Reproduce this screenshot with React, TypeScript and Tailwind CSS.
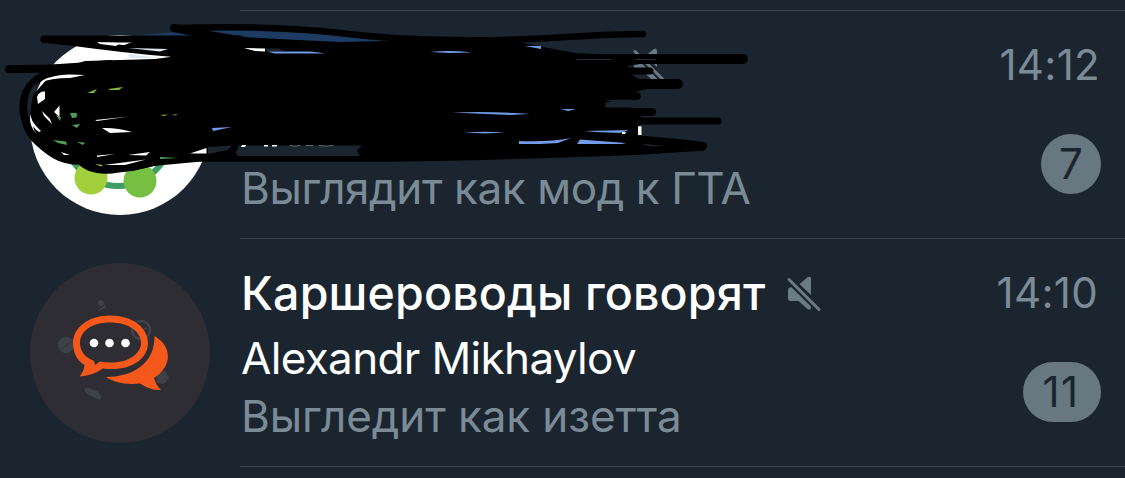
import React from "react";

type ChatRowProps = {
  avatar: React.ReactNode;
  title: React.ReactNode;
  sender: string;
  message: string;
  messageClass: string;
  time: string;
  timeClass: string;
  unread: number;
  badgeClass: string;
  children?: React.ReactNode;
};

function MutedIcon() {
  return (
    <svg className="mt-0.5 shrink-0" width="36" height="36" viewBox="0 0 36 36">
      <path
        d="M12.500 8 20.500 1.200Q24 -0.500 24 3V19ZM1 14Q1 11.300 4.500 11.300L24 30.500Q24.500 35.500 20.500 33L11.500 25H3.500Q1 25 1 22.500Z"
        fill="#6b7b84"
      />
      <path d="M2 3.500 32 33.500" stroke="#1b252f" strokeWidth="6" />
      <path d="M2 3.500 32 33.500" stroke="#6b7b84" strokeWidth="3" strokeLinecap="round" />
    </svg>
  );
}

function MoleculeAvatar() {
  return (
    <svg width="180" height="180" viewBox="0 0 180 180">
      <circle cx="90" cy="90" r="90" fill="#fff" />
      <circle cx="88" cy="98" r="53" fill="none" stroke="#3f9c62" strokeWidth="6" />
      <circle cx="61" cy="143" r="16.500" fill="#a2cf3c" />
      <circle cx="110" cy="146" r="16.500" fill="#76bf43" />
    </svg>
  );
}

function SpeechAvatar() {
  return (
    <svg width="180" height="180" viewBox="0 0 180 180">
      <circle cx="90" cy="90" r="90" fill="#2d2d33" />
      {/* faint decorations */}
      <g fill="#3e4146">
        <circle cx="36" cy="82" r="8" />
        <circle cx="71" cy="40" r="3" />
        <path d="M68 47 75 42 76 45 68 48ZM54 126Q59 123 63 127 69 127 71 134L70 137 63 134 56 130Z" />
        <path d="M126 112 135 107 139 115 134 121 127 120Z" />
      </g>
      <path d="M30 86 42 79" stroke="#37393e" strokeWidth="1.500" />
      <circle cx="111" cy="67" r="9" fill="none" stroke="#3d4449" strokeWidth="2.500" />
      <path d="M105 65 111 68 117 65M111 68V73" stroke="#3d4449" strokeWidth="2" fill="none" />
      {/* back bubble */}
      <path
        d="M124.500 73C142 83 143 103 124 115Q126 122 131 127 121 128 110 120.500C97 122 85 120 76 114C102 114 125 101 124.500 73Z"
        fill="#f4581a"
      />
      {/* front bubble */}
      <path
        fillRule="evenodd"
        d="M80 52.500C103 52.500 118 65 118 80C118 97 99 109 73 105.500Q62 113 49.500 113.500 54 108 54.500 102C46 97 43 88 43 80C43 65 58 52.500 80 52.500ZM80 59.500C62 59.500 50 68 50 80C50 87 54 94 64 98L65 102 70 98.500C95 103 111 92 111 80C111 68 98 59.500 80 59.500Z"
        fill="#f4581a"
      />
      <g fill="#fff">
        <circle cx="64" cy="80" r="4.300" />
        <circle cx="79.500" cy="80" r="4.300" />
        <circle cx="95.500" cy="80" r="4.300" />
      </g>
    </svg>
  );
}

function Scribble() {
  return (
    <svg
      className="absolute left-0 top-0"
      width="760"
      height="180"
      viewBox="0 11 760 180"
      fill="none"
      strokeLinecap="round"
      strokeLinejoin="round"
    >
      <path d="M128 36 190 31 240 30 320 34 392 42 330 44 240 42Z" fill="#1c3c63" />
      {/* solid body */}
      <path
        d="M48 78 62 68 85 61 155 59 170 57 172 54 135 49 122 46 132 42 165 40 240 37 340 42 385 41 500 38 538 46 575 53 640 56 640 64 628 66 628 72 640 80 650 88 628 94 605 100 645 112 640 118 640 126 636 142 660 150 510 156 400 160 207 161 153 166 133 171 100 173 87 170 75 162 53 157 43 143 34 130 30 112 33 95Z"
        fill="#000"
      />
      <g stroke="#000">
        <path d="M174 28C240 26 290 27 340 33S440 41 500 40 590 34 643 34" strokeWidth="6.500" />
        <path d="M174 28Q210 36 245 41" strokeWidth="8" />
        <path d="M44 39H240M44 39.500C90 43 120 51 210 56" strokeWidth="7" />
        <path d="M9 69C50 69 70 68 110 64" strokeWidth="8" />
        <path d="M52 72C22 82 20 105 26 122Q29 134 36 138" strokeWidth="8" />
        <path d="M34 138Q45 149 55 155T80 161Q90 170 104 170T150 163 210 158H390Q520 156 640 151L702 147" strokeWidth="7.500" />
        <path d="M560 59H743" strokeWidth="10" />
        <path d="M560 71H650" strokeWidth="7" />
        <path d="M560 84H678" strokeWidth="10" />
        <path d="M560 96H637" strokeWidth="7.500" />
        <path d="M560 112H652" strokeWidth="8" />
        <path d="M560 121H718" strokeWidth="7" />
        <path d="M560 135Q640 138 703 146L670 148" strokeWidth="8" />
      </g>
      {/* what still shows between the strokes */}
      <g fill="#1b252f">
        <path d="M238 145.500H362L357 150Q358 155 361 156H238Q234 154 238 148Z" />
        <path d="M208 147 232 145.500 228 150 208 154Z" />
        <path d="M28 100Q29 89 37 82L33 92Q29 98 31 115Z" />
        <path d="M265 48.500H278L285 51 266 51Z" />
        <path d="M605 102.500 640 100 642 107.500H606Z" />
      </g>
      <g fill="#fff">
        <path d="M40 83Q48 75 70 74.500L85 75 70 78Q50 78 40 83ZM37 97Q39 91 45 91.500V99L38 104ZM54 112 59.500 105.500V117ZM30 116Q33 124 41 131L39 132Q31 127 30 116ZM42 111 50 119 52 124 44 116Z" />
        <path d="M102 128Q117 127.500 132 132L110 133ZM95 120 115 118 129 116.500 97 121ZM190 153.500 206.500 148V153.500Z" />
        <path d="M97 155.500 115 154 97 157ZM128 155 150 152 146 155.500ZM104 165 146 159.500 125 165ZM61 152 70 155H64ZM97 42 120 43 116 46 100 44ZM244 48 265 48.500V51.500L255 51Z" />
        <path d="M242 145H246L245 147H241ZM264 145H268V146.500H264ZM272 145H277V146.500H272ZM638 127Q639 125.500 641.500 126.500V135H638ZM622 132H626L625 134H622Z" />
      </g>
      <path d="M128 48 168 49 160 51.500ZM128 54 158 58 130 58Z" fill="#dce8f4" />
      <g fill="#6f9be8">
        <path d="M267 51.500H310Q320 52.500 325 53.500H275ZM430 52Q450 50 472 52.500L450 53ZM525 46H541V49Z" />
        <path d="M452 112.500Q490 111 530 114L510 115ZM561 109H576L568 111ZM464 132.500Q485 131 505 132.500L485 133.500ZM212 128 232 127 213 131Z" />
        <path d="M584 131 629 130 620 133 595 132ZM519 141Q550 142 571 138L558 143 540 144H519ZM580 139.500 626 143 622 144H577Z" />
      </g>
      <g fill="#4f9e5c">
        <path d="M70 113H77L76.500 117.500 72 118ZM72 125 80 124 77 128ZM53 140 66 141.500 67 145 58 143ZM77 142 85 142.500 83 145ZM56 115 61 117 60 121ZM160 157 178 158 160 159Z" />
        <path d="M87 93 97 89 94 93ZM108 89 123 87 119 90 110 90Z" fill="#7bb844" />
        <path d="M95 164 103 165 101 166.500ZM160 115 168 114.500 164 116ZM172 114.500H178L175 115.500Z" fill="#b9b52e" />
      </g>
      <path d="M290 145.500Q294 147 300 145.500M306 145.500H313M319 145.500Q325 147 333 145.500" stroke="#5f6670" strokeWidth="1" />
      <path d="M577 59.500H611M636 59.500H655" stroke="#333a42" strokeWidth="0.800" />
    </svg>
  );
}

function ChatRow({
  avatar,
  title,
  sender,
  message,
  messageClass,
  time,
  timeClass,
  unread,
  badgeClass,
  children,
}: ChatRowProps) {
  return (
    <div className="relative flex h-[228px] pl-[30px]">
      <div className="w-[210px] shrink-0 pt-6">{avatar}</div>
      <div className="flex flex-1 justify-between border-b border-[#38424a] pr-6">
        <div className="pt-[22px] pl-px whitespace-nowrap">
          <div className="flex h-16 items-center text-[46.500px] leading-[64px] font-medium text-white tracking-[0.15px]">
            {title}
          </div>
          <div className="mt-1 h-[58px] text-[44px] leading-[58px] text-white tracking-[-0.65px]">
            {sender}
          </div>
          <div className={`text-[44px] leading-[58px] text-[#7b8b96] ${messageClass}`}>{message}</div>
        </div>
        <div className="flex flex-col items-end pt-[30px]">
          <div className={`text-[42px] leading-[48px] text-[#7b8b96] tracking-[0.3px] ${timeClass}`}>
            {time}
          </div>
          <div
            className={`mt-[45px] flex h-[60px] items-center justify-center rounded-full bg-[#687880] text-[42px] leading-[60px] text-[#1b252f] ${badgeClass}`}
          >
            {unread}
          </div>
        </div>
      </div>
      {children}
    </div>
  );
}

export default function App() {
  return (
    <div className="h-[478px] w-[1125px] overflow-hidden bg-[#1b252f] font-['Inter',sans-serif]">
      <div className="ml-[240px] h-[11px] border-b border-[#38424a]" />
      <ChatRow
        avatar={<MoleculeAvatar />}
        title={
          <div className="pl-[392px]">
            <MutedIcon />
          </div>
        }
        sender=""
        message="Выглядит как мод к ГТА"
        messageClass="tracking-[-0.4px]"
        time="14:12"
        timeClass="mr-px"
        unread={7}
        badgeClass="w-[60px]"
      >
        <Scribble />
      </ChatRow>
      <ChatRow
        avatar={<SpeechAvatar />}
        title={
          <>
            <span className="w-[546px]">Каршероводы говорят</span>
            <MutedIcon />
          </>
        }
        sender="Alexandr Mikhaylov"
        message="Выгледит как изетта"
        messageClass="tracking-[-0.1px]"
        time="14:10"
        timeClass="mr-[3px]"
        unread={11}
        badgeClass="w-[78px] pr-0.5 tracking-[1.5px]"
      />
    </div>
  );
}
